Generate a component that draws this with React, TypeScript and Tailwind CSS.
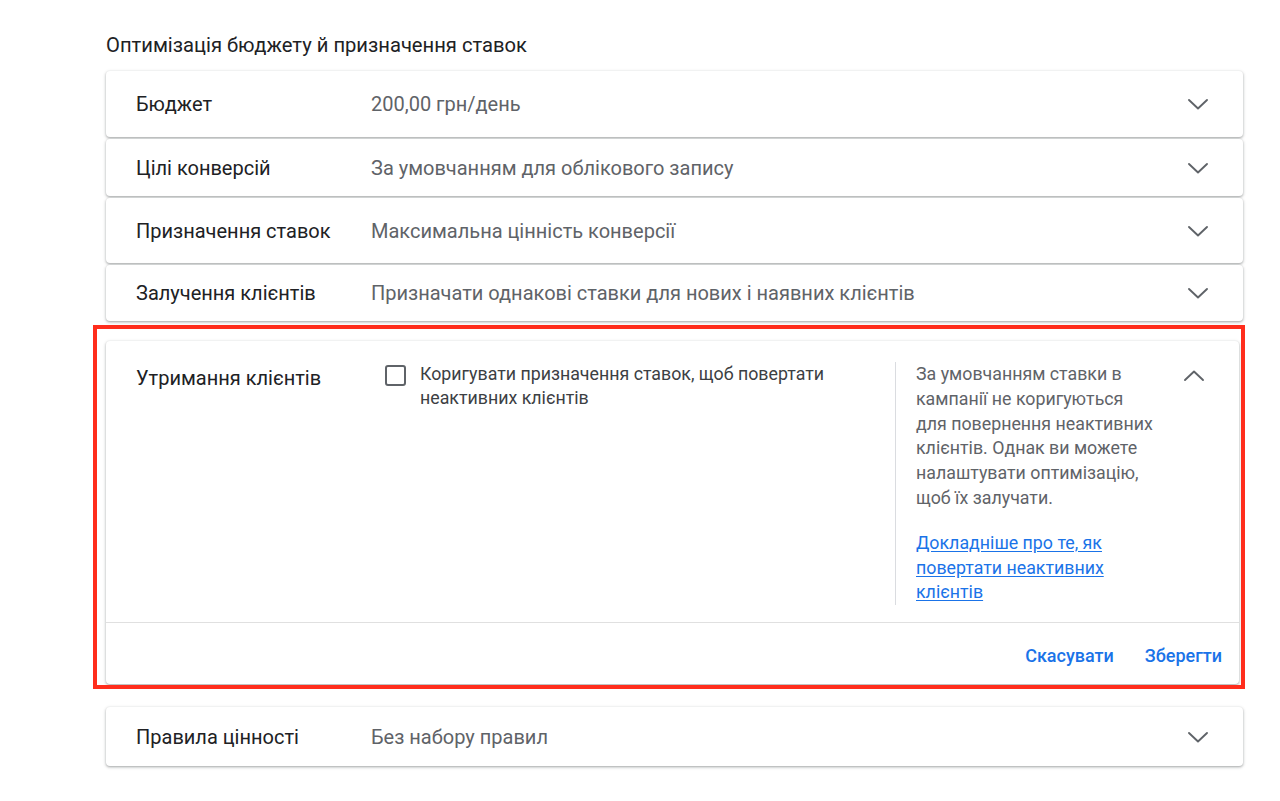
const cardShadow =
  "rounded-[4px] bg-white shadow-[0_1px_2px_rgba(60,64,67,0.3),0_1px_3px_1px_rgba(60,64,67,0.15)]";

type Row = { label: string; value: string; h: string };

const rows: Row[] = [
  { label: "Бюджет", value: "200,00 грн/день", h: "h-[66px]" },
  { label: "Цілі конверсій", value: "За умовчанням для облікового запису", h: "h-[57px]" },
  { label: "Призначення ставок", value: "Максимальна цінність конверсії", h: "h-[65px]" },
  {
    label: "Залучення клієнтів",
    value: "Призначати однакові ставки для нових і наявних клієнтів",
    h: "h-[56px]",
  },
];

const helpLines = [
  "За умовчанням ставки в",
  "кампанії не коригуються",
  "для повернення неактивних",
  "клієнтів. Однак ви можете",
  "налаштувати оптимізацію,",
  "щоб їх залучати.",
];

// Material-style chevron, drawn thin and wide like the reference
function Chevron({ up = false }: { up?: boolean }) {
  return (
    <svg viewBox="0 0 24 24" className="h-6 w-6 shrink-0 text-[#5f6368]" fill="none">
      <polyline
        points={up ? "3,16 12,7.5 21,16" : "3,8 12,16.5 21,8"}
        stroke="currentColor"
        strokeWidth={1.9}
        strokeLinecap="round"
        strokeLinejoin="round"
      />
    </svg>
  );
}

function SummaryRow({ label, value, h }: Row) {
  return (
    <div className={`${cardShadow} ${h} flex items-center pl-[30px] pr-[33px]`}>
      <div className="w-[235px] text-[20px] text-[#202124]">{label}</div>
      <div className="flex-1 text-[20px] text-[#5f6368]">{value}</div>
      <Chevron />
    </div>
  );
}

function RetentionCard() {
  return (
    <div className={`${cardShadow} h-[343px] flex flex-col`}>
      <div className="flex min-h-0 flex-1 pl-[30px] pr-[33px] pt-[21px]">
        <div className="w-[249px] pt-[1px] text-[20px] text-[#202124]">Утримання клієнтів</div>
        <label className="flex w-[510px] items-start gap-[14px]">
          <span className="mt-[3px] h-[21px] w-[21px] shrink-0 rounded-[3px] border-2 border-[#5f6368]" />
          <span className="text-[17.8px] leading-6 text-[#3c4043]">
            Коригувати призначення ставок, щоб повертати
            <br />
            неактивних клієнтів
          </span>
        </label>
        <div className="mb-[17px] flex-1 self-start border-l border-[#dadce0] pl-[20px] text-[17.8px] leading-[24.8px] text-[#5f6368]">
          <p className="whitespace-nowrap">
            {helpLines.map(l => (
              <span key={l} className="block">
                {l}
              </span>
            ))}
          </p>
          <a href="#" className="mt-[20px] block w-[200px] text-[#1a73e8] underline underline-offset-2">
            Докладніше про те, як повертати неактивних клієнтів
          </a>
        </div>
        <div className="pt-[2px]">
          <Chevron up />
        </div>
      </div>
      <div className="flex h-[62px] shrink-0 items-center justify-end gap-[31px] border-t border-[#e0e0e0] pr-[17px] pt-[3px]">
        <button className="text-[18px] font-medium text-[#1a73e8]">Скасувати</button>
        <button className="text-[18px] font-medium text-[#1a73e8]">Зберегти</button>
      </div>
    </div>
  );
}

export default function App() {
  return (
    <div
      className="min-h-[801px] w-[1280px] bg-white pl-[106px] pt-[33px]"
      style={{ fontFamily: "Roboto, 'Noto Sans', sans-serif" }}
    >
      <div className="w-[1137px]">
        <h2 className="text-[20.2px] leading-6 text-[#202124]">
          Оптимізація бюджету й призначення ставок
        </h2>
        <div className="mt-[14px] flex flex-col gap-[2px]">
          {rows.map(r => (
            <SummaryRow key={r.label} {...r} />
          ))}
        </div>
        <div className="ml-[-13px] mt-[4px] h-[364px] w-[1152px] overflow-hidden border-4 border-[#ff2d1c] pl-[9px] pr-[2px] pt-[12px]">
          <RetentionCard />
        </div>
        <div className={`${cardShadow} mt-[18px] flex h-[59px] items-center pl-[30px] pr-[33px]`}>
          <div className="w-[235px] text-[20px] text-[#202124]">Правила цінності</div>
          <div className="flex-1 text-[20px] text-[#5f6368]">Без набору правил</div>
          <Chevron />
        </div>
      </div>
    </div>
  );
}
